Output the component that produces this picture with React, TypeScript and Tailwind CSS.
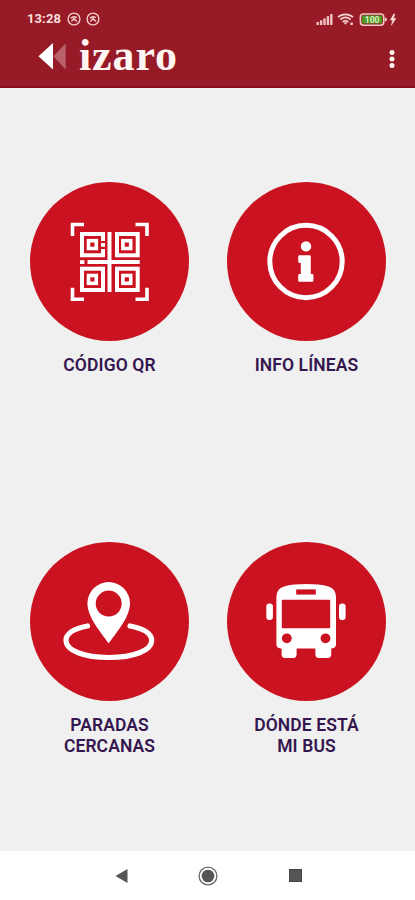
import type { ReactNode } from "react";

function NfcIcon() {
  return (
    <svg viewBox="0 0 14 14" className="w-3.5 h-3.5" fill="none" stroke="#f3cdca" strokeWidth="1.4">
      <circle cx="7" cy="7" r="5.9" />
      <path d="M3.8 6.4Q6.4 3.4 9.8 5.6M4.6 9.6Q5.6 6.6 8.4 7.8M6 5.6l4 4" />
    </svg>
  );
}

function StatusBar() {
  return (
    <div className="h-[37px] flex items-center justify-between pl-[27px] pr-[17px] text-[#f8dedb]">
      <div className="flex items-center">
        <span className="w-[40px] text-[13px] font-bold leading-none tracking-[0.1px]">13:28</span>
        <span className="flex gap-[5px]">
          <NfcIcon />
          <NfcIcon />
        </span>
      </div>
      <svg width="82" height="16" viewBox="0 0 82 16">
        <g fill="#f0c4c2">
          <rect x="0.5" y="11" width="2.4" height="3" />
          <rect x="3.9" y="9.3" width="2.4" height="4.7" />
          <rect x="7.3" y="7.4" width="2.4" height="6.6" />
          <rect x="10.7" y="5.2" width="2.4" height="8.8" />
          <rect x="14.1" y="3" width="2.4" height="11" />
        </g>
        <g fill="none" stroke="#f5d0cd" strokeWidth="1.8">
          <path d="M22 6.2C26 2.4 33 2.4 37 6.2M24.4 8.6C27.4 5.8 31.6 5.8 34.6 8.6M26.8 11C28.4 9.4 30.6 9.4 32.2 11" />
        </g>
        <path d="M27.4 11.2h4.2l-2.1 2.6z" fill="#f5d0cd" />
        <rect x="34.4" y="11.6" width="2.4" height="2.4" fill="#f5d0cd" />
        <rect x="44.4" y="3" width="23.4" height="11.2" rx="3.2" fill="none" stroke="#f0c9c4" strokeWidth="1.6" />
        <rect x="46" y="4.6" width="20.2" height="8" rx="1.6" fill="#4f9a25" />
        <path d="M69 6.6q2 .2 2 2t-2 2z" fill="#f0c9c4" />
        <text x="56.1" y="11.6" textAnchor="middle" fontSize="8.5" fontWeight="700" fill="#d9f0c4">
          100
        </text>
        <path d="M77.8 3l-3.4 6h2.4l-1.4 5.2 4.4-6.6h-2.4l1.4-4.6z" fill="#f8dedb" stroke="#f8dedb" strokeWidth="0.6" />
      </svg>
    </div>
  );
}

function Header() {
  return (
    <header className="h-[88px] bg-[#971b26] border-b-2 border-[#8a0b1b]">
      <StatusBar />
      <div className="h-[38px] flex items-center justify-between pl-[38px] pr-[20px]">
        <div className="flex items-center">
          <svg width="29" height="28" viewBox="0 0 29 28">
            <path d="M0.5 14.3L15 1v26.6z" fill="#fff" />
            <path d="M15.5 14.3L27.6 1.5v26z" fill="#b9626b" />
          </svg>
          <span className="ml-[12px] font-['Liberation_Serif',serif] font-bold text-[44px] leading-[38px] tracking-[0.9px] text-[#fff5f1]">
            izaro
          </span>
        </div>
        <svg width="6" height="20" viewBox="0 0 6 20" className="mt-1.5" fill="#fff1ec">
          <circle cx="3" cy="3.6" r="2.5" />
          <circle cx="3" cy="10" r="2.5" />
          <circle cx="3" cy="16.4" r="2.5" />
        </svg>
      </div>
    </header>
  );
}

function QrIcon() {
  return (
    <>
      <path
        d="M42.5 54V42.5H54M105.5 42.5H117V54M117 105.7V117.2H105.5M54 117.2H42.5V105.7"
        strokeWidth="3.6"
      />
      <g strokeWidth="4">
        <path d="M73 59V52H52V73.3H73V67" />
        <rect x="87" y="52" width="20.7" height="21.3" />
        <rect x="52" y="86.7" width="21" height="21.3" />
        <rect x="87" y="86.7" width="20.7" height="21.3" />
        <path d="M79.5 50V110M57.5 80H109.7" />
      </g>
      <g strokeWidth="3.6">
        <rect x="58.5" y="58.7" width="7.8" height="7.8" />
        <rect x="92.9" y="58.7" width="7.8" height="7.8" />
        <rect x="58.5" y="93.5" width="7.8" height="7.8" />
        <rect x="92.9" y="93.5" width="7.8" height="7.8" />
      </g>
      <g fill="#fff" stroke="none">
        <rect x="50" y="78.2" width="4.4" height="3.8" />
        <rect x="71" y="61" width="4" height="3.8" />
      </g>
    </>
  );
}

function InfoIcon() {
  return (
    <>
      <circle cx="79" cy="79.5" r="36.2" strokeWidth="5" />
      <g fill="#fff" stroke="none">
        <circle cx="79" cy="64.4" r="5.2" />
        <path d="M72.4 73.3H82.7Q83.8 73.3 83.8 74.4V91.9H85.2Q86.4 91.9 86.4 93V98.6Q86.4 99.8 85.2 99.8H72.4Q71.2 99.8 71.2 98.6V93Q71.2 91.9 72.4 91.9H73.8V80.9H72.4Q71.2 80.9 71.2 79.8V74.4Q71.2 73.3 72.4 73.3z" />
      </g>
    </>
  );
}

function PinIcon() {
  return (
    <>
      <path
        d="M57.5 84C44.5 86.5 36 91.5 36 98.5C36 108.5 54 115.5 78.8 115.5S121.7 108.5 121.7 98.5C121.7 91.5 113 86.5 100 84"
        strokeWidth="5.2"
        strokeLinecap="round"
      />
      <path
        d="M78.7 101.5C73 93 57.4 76 57.4 61.3A21.3 21.3 0 0 1 100 61.3C100 76 84.4 93 78.7 101.5zM78.7 48.6a13 13 0 1 0 0 26a13 13 0 1 0 0-26z"
        fill="#fff"
        fillRule="evenodd"
        stroke="none"
      />
    </>
  );
}

function BusIcon() {
  return (
    <g fill="#fff" stroke="none">
      <path d="M49.4 55Q49.4 46.5 57 44.4Q66 42 79.2 42T101.4 44.4Q109 46.5 109 55V102Q109 106.4 104.6 106.4H104.2V112.6Q104.2 116 100.8 116H91.8Q88.4 116 88.4 112.6V106.4H69.6V112.6Q69.6 116 66.2 116H58Q54.6 116 54.6 112.6V106.4H53.8Q49.4 106.4 49.4 102z" />
      <rect x="39.3" y="61.5" width="6.6" height="16.4" rx="3" />
      <rect x="112" y="61.5" width="6.6" height="16.4" rx="3" />
      <g fill="#cb1220">
        <rect x="69.2" y="47.4" width="19.6" height="5.2" />
        <rect x="54.8" y="57.8" width="48.4" height="28.4" rx="1" />
        <circle cx="59.8" cy="96.3" r="4.9" />
        <circle cx="98.5" cy="96.3" r="4.9" />
      </g>
    </g>
  );
}

function MenuItem({ icon, lines }: { icon: ReactNode; lines: string[] }) {
  return (
    <button className="w-[159px] flex flex-col items-center">
      <span className="w-[159px] h-[159px] rounded-full bg-[#cb1220]">
        <svg viewBox="0 0 159 159" fill="none" stroke="#fff">
          {icon}
        </svg>
      </span>
      <span className="mt-[14px] pl-px text-[17.5px] leading-[20.5px] font-semibold tracking-[0.1px] text-[#35174f]">
        {lines.map((line) => (
          <span key={line} className="block whitespace-nowrap">
            {line}
          </span>
        ))}
      </span>
    </button>
  );
}

export default function App() {
  return (
    <div className="w-full h-[900px] flex flex-col overflow-hidden bg-[#f0f0f0] font-['Roboto',sans-serif]">
      <Header />
      <main className="flex-1 grid grid-cols-2 grid-rows-[360px_1fr] gap-x-[38px] items-start w-[356px] mx-auto pt-[94px]">
        <MenuItem icon={<QrIcon />} lines={["CÓDIGO QR"]} />
        <MenuItem icon={<InfoIcon />} lines={["INFO LÍNEAS"]} />
        <MenuItem icon={<PinIcon />} lines={["PARADAS", "CERCANAS"]} />
        <MenuItem icon={<BusIcon />} lines={["DÓNDE ESTÁ", "MI BUS"]} />
      </main>
      <nav className="h-[49px] bg-white flex items-center justify-between pl-[115px] pr-[113px]">
        <svg width="13" height="16" viewBox="0 0 13 16">
          <path d="M0.5 8L12.5 1v14z" fill="#555" />
        </svg>
        <svg width="20" height="20" viewBox="0 0 20 20" className="mr-[2px]">
          <circle cx="10" cy="10" r="8.9" fill="none" stroke="#666" strokeWidth="1.3" />
          <circle cx="10" cy="10" r="6.3" fill="#555" />
        </svg>
        <svg width="13" height="13" viewBox="0 0 13 13">
          <rect x="0.5" y="0.5" width="12" height="12" fill="#555" stroke="#444" />
        </svg>
      </nav>
    </div>
  );
}
